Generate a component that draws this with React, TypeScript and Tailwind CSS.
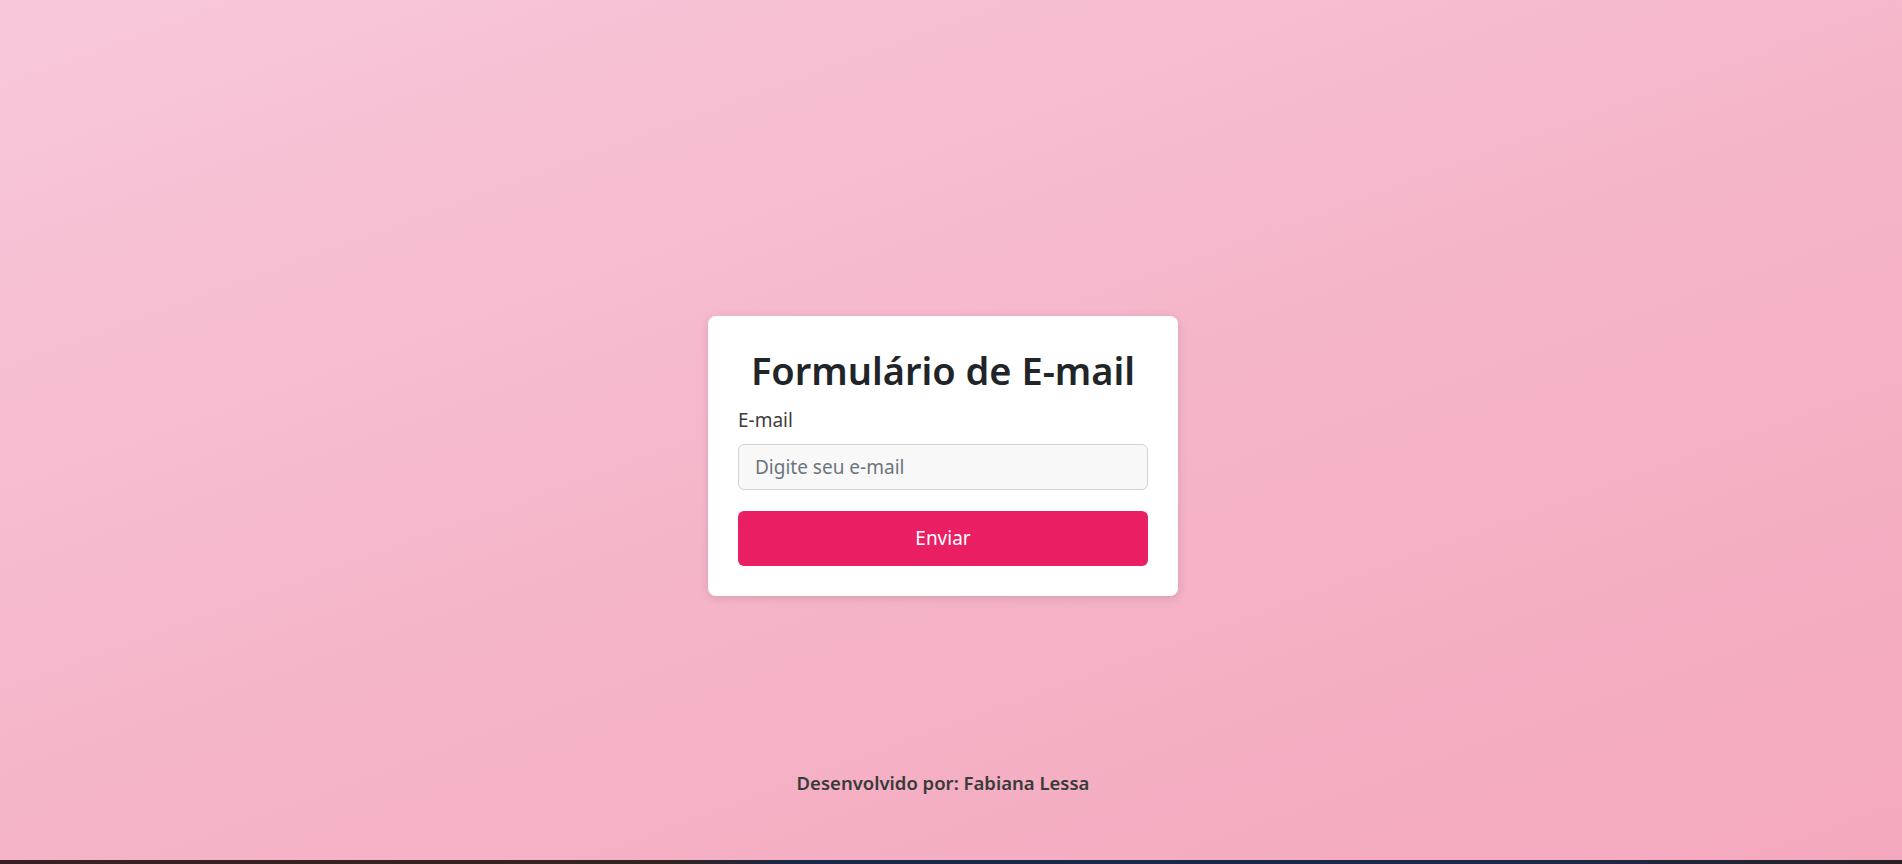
export default function App() {
  return (
    <div
      className="flex h-screen flex-col bg-[linear-gradient(160deg,#f8c7da_0%,#f5b4c8_55%,#f4a8bd_100%)]"
      style={{ fontFamily: '"Noto Sans", "Open Sans", Arial, sans-serif' }}
    >
      <main className="flex flex-1 items-center justify-center pt-[144px] pr-[16px]">
        <form
          className="w-[470px] rounded-lg bg-white px-[30px] pt-[30px] pb-[30px] shadow-[0_2px_10px_rgba(0,0,0,0.12)]"
          onSubmit={(e) => e.preventDefault()}
        >
          <h1 className="text-center text-[38px] leading-[48px] font-semibold text-[#212529]">
            Formulário de E-mail
          </h1>
          <label htmlFor="email" className="mt-[13px] block text-[19px] leading-[26px] text-[#3d3d3d]">
            E-mail
          </label>
          <input
            id="email"
            type="email"
            placeholder="Digite seu e-mail"
            className="mt-[11px] block h-[46px] w-full rounded-md border border-[#ced4da] bg-[#f8f8f8] px-4 text-[19px] text-[#212529] placeholder:text-[#6c757d] outline-none"
          />
          <button
            type="submit"
            className="mt-[21px] block h-[55px] w-full rounded-md bg-[#e91e63] text-[19px] text-white"
          >
            Enviar
          </button>
        </form>
      </main>
      <footer className="pr-[16px] pb-[62px] text-center text-[18.5px] leading-[30px] font-semibold text-[#3a3a3a]">
        Desenvolvido por: Fabiana Lessa
      </footer>
      <div className="h-[4px] bg-[linear-gradient(90deg,#3a2024_0%,#33241f_35%,#1b2a4a_42%,#1b2a4a_80%,#2a2225_100%)]" />
    </div>
  );
}
